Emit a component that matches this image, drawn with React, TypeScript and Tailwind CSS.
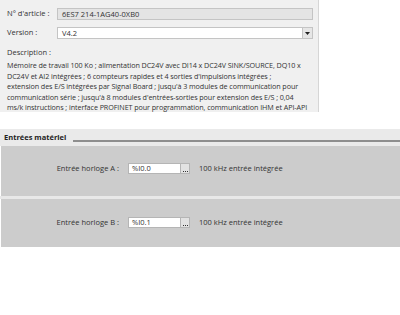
import React from "react";

const font = { fontFamily: '"Open Sans", "Noto Sans", sans-serif' };

const descLines = [
    "Mémoire de travail 100 Ko ; alimentation DC24V avec DI14 x DC24V SINK/SOURCE, DQ10 x",
    "DC24V et AI2 intégrées ; 6 compteurs rapides et 4 sorties d'impulsions intégrées ;",
    "extension des E/S intégrées par Signal Board ; jusqu'à 3 modules de communication pour",
    "communication série ; jusqu'à 8 modules d'entrées-sorties pour extension des E/S ; 0,04",
    "ms/k instructions ; interface PROFINET pour programmation, communication IHM et API-API",
];

const ClockRow: React.FC<{ label: string; value: string }> = ({ label, value }) => (
    <div className="flex items-center h-[11px]">
        <div className="w-[118px] text-right whitespace-nowrap">{label}</div>
        <div className="ml-[9px] flex h-[11px] w-[62px] border border-[#b5b5b5] bg-white">
            <div className="flex-1 pl-[3px] leading-[9px]">{value}</div>
            <div className="w-[9px] border-l border-[#b5b5b5] bg-[#e2e2e2] flex items-end justify-center gap-[1px] pb-[1px]">
                <span className="w-[1px] h-[1px] bg-[#333]" />
                <span className="w-[1px] h-[1px] bg-[#333]" />
                <span className="w-[1px] h-[1px] bg-[#333]" />
            </div>
        </div>
        <div className="ml-[9px] whitespace-nowrap">100 kHz entrée intégrée</div>
    </div>
);

export default function App() {
    return (
        <div
            className="w-[400px] h-[315px] bg-white text-[#333333] text-[7.5px] overflow-hidden"
            style={font}
        >
            <div className="w-[319px] h-[112px] bg-[#f0f0f0] border-r border-[#d6d6d6] overflow-hidden">
                <div className="flex items-center h-[12px] mt-[8px]">
                    <div className="w-[57px] pl-[7px]">N° d'article :</div>
                    <div className="w-[256px] h-[12px] border border-[#c4c4c4] bg-[#e4e4e4] pl-[4px] leading-[10px]">
                        6ES7 214-1AG40-0XB0
                    </div>
                </div>
                <div className="flex items-center h-[12px] mt-[7px]">
                    <div className="w-[57px] pl-[7px]">Version :</div>
                    <div className="flex w-[256px] h-[12px] border border-[#c4c4c4] bg-white">
                        <div className="flex-1 pl-[4px] leading-[10px]">V4.2</div>
                        <div className="w-[10px] border-l border-[#c4c4c4] bg-[#e6e6e6] flex items-center justify-center">
                            <svg width="5" height="3" viewBox="0 0 5 3">
                                <path d="M0 0H5L2.5 3Z" fill="#222" />
                            </svg>
                        </div>
                    </div>
                </div>
                <div className="pl-[7px] mt-[8px] leading-[10px]">Description :</div>
                <div className="pl-[7px] mt-[3px] leading-[10.5px] text-[7.2px] tracking-[-0.08px]">
                    {descLines.map((l) => (
                        <div key={l} className="whitespace-nowrap">
                            {l}
                        </div>
                    ))}
                </div>
            </div>

            <div className="mt-[17px] h-[17px] bg-[#eaeaea] flex items-start">
                <div className="pl-[4px] pt-[3px] font-bold text-[#222] whitespace-nowrap leading-[10px]">
                    Entrées matériel
                </div>
                <div className="ml-[7px] mt-[11px] flex-1 h-[2px] bg-[#8e8e8e]" />
            </div>

            <div className="ml-[1px] h-[50px] bg-[#cccccc] pt-[17px]">
                <ClockRow label="Entrée horloge A :" value="%I0.0" />
            </div>
            <div className="h-[3px] bg-[#e8e8e8]" />
            <div className="ml-[1px] h-[48px] bg-[#cccccc] pt-[18px]">
                <ClockRow label="Entrée horloge B :" value="%I0.1" />
            </div>
        </div>
    );
}
